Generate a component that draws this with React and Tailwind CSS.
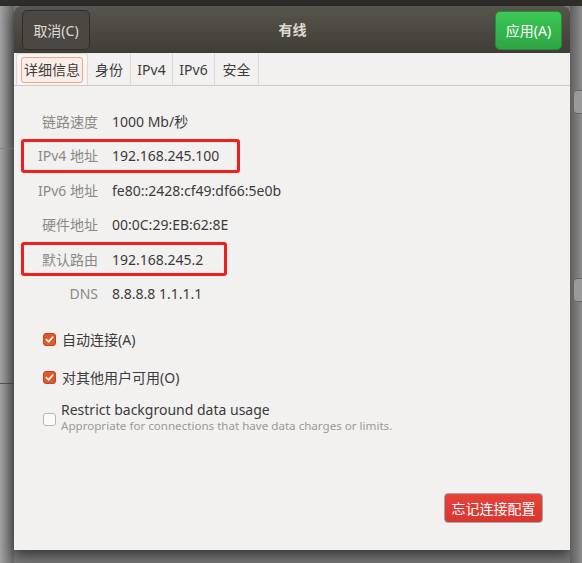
import React from 'react';

const font = { fontFamily: '"Noto Sans", "Noto Sans CJK SC", sans-serif' };

const rows = [
  { label: '链路速度', value: '1000 Mb/秒' },
  { label: 'IPv4 地址', value: '192.168.245.100', mark: 'w-[219px]' },
  { label: 'IPv6 地址', value: 'fe80::2428:cf49:df66:5e0b' },
  { label: '硬件地址', value: '00:0C:29:EB:62:8E' },
  { label: '默认路由', value: '192.168.245.2', mark: 'w-[206px]' },
  { label: 'DNS', value: '8.8.8.8 1.1.1.1' },
];

function Check({ checked }) {
  if (!checked) {
    return <span className="block w-[13px] h-[13px] rounded-[3px] border border-[#b8b6b2] bg-[#fafafa] shrink-0" />;
  }
  return (
    <span className="w-[13px] h-[13px] rounded-[3px] bg-[#e1592a] border border-[#c4461c] flex items-center justify-center shrink-0">
      <svg width="9" height="9" viewBox="0 0 10 10">
        <path d="M1.5 5.2 L4 7.6 L8.6 2.4" stroke="white" strokeWidth="1.8" fill="none" strokeLinecap="round" strokeLinejoin="round" />
      </svg>
    </span>
  );
}

export default function App() {
  return (
    <div className="w-[582px] h-[563px] overflow-hidden bg-[#7b7b7b] flex flex-col" style={font}>
      <div className="h-[6px] bg-[#2f2e2b] shrink-0" />
      <div className="flex flex-1">
        <div className="w-[14px] shrink-0 bg-gradient-to-r from-[#a3a3a3] to-[#6a6a6a] flex flex-col">
          <div className="h-[142px]" />
          <div className="h-px bg-[#888]" />
          <div className="h-[234px]" />
          <div className="h-px bg-[#555]" />
        </div>
        <div className="flex flex-col shrink-0">
          <div className="w-[556px] h-[544px] flex flex-col bg-[#f2f1f0] rounded-t-[6px] shadow-[0_6px_14px_rgba(0,0,0,0.55)]">
            {/* header bar */}
            <div className="h-[47px] shrink-0 rounded-t-[6px] bg-gradient-to-b from-[#58554e] to-[#403d38] flex items-center px-[8px] justify-between">
              <div className="w-[68px] h-[40px] mt-[1px] rounded-[5px] border border-[#2f2d29] bg-[#4b4843] flex items-center justify-center text-[14px] text-[#dfdbd2]">
                取消(C)
              </div>
              <div className="text-[14px] font-bold text-[#dfdbd2]">有线</div>
              <div className="w-[67px] h-[39px] mt-[2px] rounded-[5px] border border-[#2a8a3a] bg-gradient-to-b from-[#3cc954] to-[#2ea444] flex items-center justify-center text-[14px] text-white">
                应用(A)
              </div>
            </div>
            {/* tabs */}
            <div className="h-[33px] shrink-0 flex border-b border-[#cdcbc8] pl-[2px] text-[14px] text-[#3c3c3c]">
              <div className="w-[72px] border-x border-t border-[#dddad6] bg-[#f6f5f4] rounded-t-[3px] flex items-center justify-center">
                <span className="px-[2px] py-px rounded-[3px] border border-[#f0a48a] bg-[#fbeee8] leading-[22px]">详细信息</span>
              </div>
              <div className="w-[43px] border-r border-[#dddad6] flex items-center justify-center">身份</div>
              <div className="w-[42px] border-r border-[#dddad6] flex items-center justify-center">IPv4</div>
              <div className="w-[42px] border-r border-[#dddad6] flex items-center justify-center">IPv6</div>
              <div className="w-[44px] border-r border-[#dddad6] flex items-center justify-center">安全</div>
            </div>
            {/* details */}
            <div className="flex flex-col pt-[18px] pl-[7px]">
              {rows.map((r) => (
                <div key={r.label} className="h-[34.5px] flex items-center">
                  <div
                    className={
                      'h-[34px] flex items-center rounded-[3px] ' +
                      (r.mark ? r.mark + ' border-[3px] border-[#f11f1a]' : 'w-[219px] border-[3px] border-transparent')
                    }
                  >
                    <span className="w-[74px] shrink-0 whitespace-nowrap text-right text-[14px] text-[#8a8986]">{r.label}</span>
                    <span className="ml-[14px] text-[14px] text-[#3b3b3b] whitespace-nowrap">{r.value}</span>
                  </div>
                </div>
              ))}
            </div>
            {/* options */}
            <div className="flex flex-col pl-[29px] pt-[16px] text-[14px] text-[#3b3b3b]">
              <div className="flex items-center gap-[6px] h-[24px]">
                <Check checked />
                <span>自动连接(A)</span>
              </div>
              <div className="flex items-center gap-[6px] h-[24px] mt-[14px]">
                <Check checked />
                <span>对其他用户可用(O)</span>
              </div>
              <div className="flex items-start gap-[5px] mt-[12px]">
                <span className="block mt-[12px]"><Check /></span>
                <div className="flex flex-col">
                  <span className="leading-[18px]">Restrict background data usage</span>
                  <span className="text-[11.6px] leading-[14px] text-[#9a9995] whitespace-nowrap">Appropriate for connections that have data charges or limits.</span>
                </div>
              </div>
            </div>
            <div className="flex-1" />
            <div className="flex justify-end pr-[27px] pb-[27px]">
              <div className="w-[99px] h-[30px] rounded-[4px] border border-[#a9a6a3] bg-gradient-to-b from-[#e6423a] to-[#d83630] flex items-center justify-center text-[14px] text-white">
                忘记连接配置
              </div>
            </div>
          </div>
        </div>
        <div className="flex-1 min-w-0 overflow-hidden bg-gradient-to-r from-[#5f5f5f] to-[#8c8c8c] flex flex-col pl-[3px]">
          <div className="h-[84px]" />
          <div className="w-[20px] h-[24px] shrink-0 rounded-[4px] border border-[#666] bg-[#9a9a9a]" />
          <div className="h-[164px]" />
          <div className="w-[20px] h-[24px] shrink-0 rounded-[4px] border border-[#666] bg-[#9a9a9a]" />
        </div>
      </div>
    </div>
  );
}
